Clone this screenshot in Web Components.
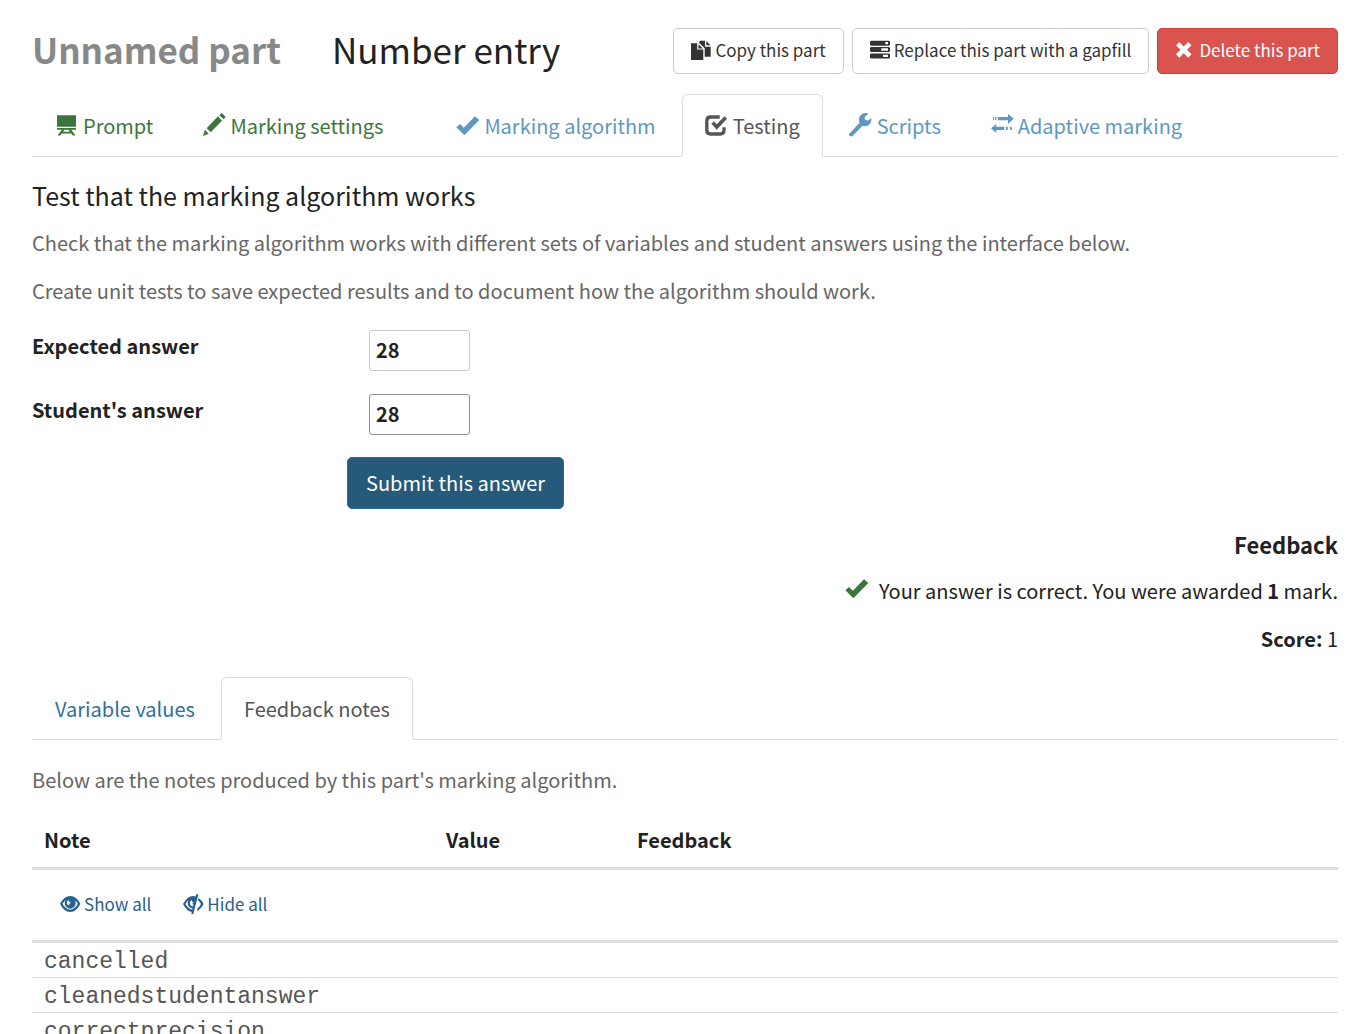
<!DOCTYPE html>
<html lang="en">
<head>
<meta charset="utf-8">
<title>Number entry part</title>
<style>
  :root {
    --text: #222;
    --muted: #666;
    --line: #ddd;
    --link: #2e6f9e;
    --green: #3c763d;
    --soft-blue: #5e98bf;
    --size: 20px;
    --size-small: 17px;
    --leading: 31px;
  }
  html { scrollbar-width: none; }
  body {
    margin: 0;
    background: #fff;
    color: var(--text);
    font-family: "Noto Sans CJK SC", "Noto Sans", sans-serif;
    font-size: var(--size);
    line-height: var(--leading);
  }
</style>
</head>
<body>
<part-editor></part-editor>
<script>
const icons = {
  blackboard: '<path d="M2 1.3h19v11.4H2zM2 14h19v1.8h-4.6l4 5.6h-2.6l-1.5-2H6.700l-1.500 2H2.600l4-5.600H2zM9.500 15.800l-1.400 1.900h6.800l-1.400-1.900z"/>',
  pencil: '<path d="M19.700-1l4 4-2 2.300-4.400-4zM16 2.300l4 4.400L8.700 18.300l-4-4zM3 15.700l3.700 4L1 22z"/>',
  ok: '<path d="M.3 13.300L4 10.100l3.800 3.700L19 2.300l4.300 3.600L8.400 21.200z"/>',
  check: '<path d="M14.700 3H5.700Q1.800 3 1.800 6.700v9.600Q1.800 20 5.700 20h9.600Q19 20 19 16.300v-3" fill="none" stroke="currentColor" stroke-width="3.300"/><path d="M6.300 9.500L9 7.400l2.700 2.800 7.800-8 2.500 2.500-10.300 11z"/>',
  wrench: '<path d="M0 20L10.500 9Q8.500 3 13 0q3-1.600 6.300-.3l-3.800 3.500.8 2.800 2.900.6L22.300 4Q23.300 9 19 11.500q-3 1.200-5.500.3L3.500 22Q1.500 23 .3 21.500z"/>',
  transfer: '<path d="M3 3h1v3.300H3zM5.200 3h1.200v3.300H5.200zM7.700 3H18V0l5.700 4.700L18 10V6.300H7.700zM6.300 10v2.700h8V16h-8v3L1 14.300zM16 12.700h1.700V16H16zM20 12.700h1.700V16H20z"/>',
  duplicate: '<path d="M8.700.7H14v6h5.700v10h-6V8.200L8.200 3zM15.300.9l4.200 4.400h-4.200zM0 3.300h6.200v6.200h6.100V20H0zM7.400 4.200l4.600 4.200H7.400z"/>',
  tasks: '<path fill-rule="evenodd" d="M1.500.7h17Q20 .7 20 2v2.500q0 1.200-1.500 1.200h-17Q0 5.700 0 4.500V2Q0 .7 1.500.7zM15.300 2v2.300H18V2zM1.500 7h17Q20 7 20 8.300v2.500q0 1.200-1.500 1.200h-17Q0 12 0 10.800V8.300Q0 7 1.500 7zM11.300 8.300v2.400H18V8.300zM1.500 13.400h17q1.500 0 1.500 1.200v2.600q0 1.300-1.500 1.300h-17Q0 18.500 0 17.200v-2.600q0-1.200 1.500-1.200zM13 14.800v2.300h5v-2.300z"/>',
  remove: '<path d="M1 5.300L4.300 2 8.700 6.500 13.200 2l3.300 3.300L12 9.800l4.500 4.500-3.300 3.400-4.500-4.500-4.400 4.500L1 14.300l4.400-4.500z"/>',
  eye: '<path fill-rule="evenodd" d="M0 9.700Q4 2 10.200 2t10.200 7.700Q16.400 18 10.200 18T0 9.700zM2.600 9.800q3 5.800 7.600 5.800t7.600-5.800q-1.200-2.400-3.100-3.800 1 1.500 1 3.200a5.500 5.500 0 0 1-11 0q0-1.700 1-3.200Q3.800 7.400 2.600 9.800zM8.600 6q-2 1-1.800 3.300.3 2.100 2.600 2.200L9 9.800q1.700.2 1.700-1.500-1.900.2-2.100-2.300z"/>',
  eyeClose: '<path fill-rule="evenodd" d="M13.300.2h2.100L10.300 20H8.200l.6-2Q3.600 17 0 9.900 4.200 2 10.200 2q1.300 0 2.500.4zM5.300 5.900Q3.700 7.300 2.500 9.900q2.600 4.800 6.800 5.600l.3-1.100q-4.700-.6-5-5.100 0-1.900.7-3.400zM8.700 6.100Q6.500 7.300 6.800 9.700q.4 2.200 3.200 2.800l.5-1.800q-1.500 0-1.500-1.100 1.500.1 1.500-1.300-1.700.1-1.800-2.200z"/><path d="M15.600 3.900q3 2 5 6-2.700 5.300-6.800 7.200l.7-2.800q2-1.500 3.500-4.400-1.300-2.400-3.100-4z"/>'
};

const define = (name, template, setup) => customElements.define(name, class extends HTMLElement {
  connectedCallback() {
    if (this.shadowRoot) return;
    const root = this.attachShadow({ mode: "open" });
    root.innerHTML = template;
    if (setup) setup(this, root);
  }
});

// Glyph drawn in the current text colour; "small" suits button-sized text.
define("glyph-icon", `
  <style>
    :host { display: block; flex: none; width: 23px; height: 23px; }
    :host([small]) { width: 20px; height: 20px; }
    svg { display: block; width: 100%; height: 100%; overflow: visible; fill: currentColor; }
  </style>
  <svg aria-hidden="true"></svg>`, (host, root) => {
  const svg = root.querySelector("svg");
  const side = host.hasAttribute("small") ? 20 : 23;
  svg.setAttribute("viewBox", `0 0 ${side} ${side}`);
  svg.innerHTML = icons[host.getAttribute("name")];
});

define("action-button", `
  <style>
    :host { display: block; }
    button {
      display: flex; align-items: center; gap: 4px; margin: 0; padding: 7px 17px 9px;
      border: 1px solid #ccc; border-radius: 5px; background: #fff; color: #333;
      font: inherit; font-size: var(--size-small); line-height: 28px; white-space: nowrap; cursor: pointer;
    }
    :host([kind=danger]) button { background: #d9534f; border-color: #d43f3a; color: #fff; }
    :host([kind=primary]) button {
      background: #265a7a; border-color: #2a6a96; color: #fff;
      font-size: var(--size); line-height: 30px; padding: 10px 18px;
    }
    :host([kind=link]) button { border-color: transparent; background: none; color: #286090; padding: 7px 15px 9px; }
  </style>
  <button type="button"><slot name="icon"></slot><span><slot></slot></span></button>`);

define("part-header", `
  <style>
    :host { display: flex; align-items: flex-start; justify-content: space-between; }
    h2 { display: flex; gap: 51px; margin: 0; font-size: 35px; line-height: 42px; font-weight: 400; white-space: nowrap; }
    b { color: #888; }
    .actions { display: flex; gap: 8px; }
  </style>
  <h2><b>Unnamed part</b><span>Number entry</span></h2>
  <div class="actions">
    <action-button><glyph-icon slot="icon" small name="duplicate"></glyph-icon>Copy this part</action-button>
    <action-button><glyph-icon slot="icon" small name="tasks"></glyph-icon>Replace this part with a gapfill</action-button>
    <action-button kind="danger"><glyph-icon slot="icon" small name="remove"></glyph-icon>Delete this part</action-button>
  </div>`);

define("tab-bar", `
  <style>
    :host { display: block; border-bottom: 1px solid var(--line); }
    nav { display: flex; gap: 3px; margin-bottom: -1px; }
  </style>
  <nav><slot></slot></nav>`);

define("tab-item", `
  <style>
    :host { display: block; color: var(--link); }
    :host([tone=required]) { color: var(--green); }
    :host([tone=optional]) { color: var(--soft-blue); }
    :host([active]) { color: #555; }
    :host([apart]) { margin-left: 24px; }
    a {
      display: flex; align-items: center; gap: 5px; padding: 15px 22px;
      border: 1px solid transparent; border-radius: 6px 6px 0 0;
      color: inherit; text-decoration: none; white-space: nowrap;
    }
    :host([active]) a { background: #fff; border-color: var(--line) var(--line) #fff; }
  </style>
  <a href="#"><slot name="icon"></slot><span><slot></slot></span></a>`);

define("answer-field", `
  <style>
    :host { display: flex; align-items: flex-start; font-weight: 700; }
    label { width: 337px; }
    input {
      box-sizing: border-box; width: 101px; height: 41px; margin: 0; padding: 0 6px 2px;
      border: 1px solid #8f8f9d; border-radius: 3px; background: #fff; color: var(--text);
      font: inherit; line-height: 37px;
    }
    input:disabled { border-color: #c7c7ce; opacity: 1; -webkit-text-fill-color: var(--text); }
  </style>
  <label for="answer"></label><input id="answer" type="text">`, (host, root) => {
  const input = root.querySelector("input");
  root.querySelector("label").textContent = host.getAttribute("label");
  input.value = host.getAttribute("value");
  input.disabled = host.hasAttribute("disabled");
});

define("feedback-summary", `
  <style>
    :host { display: flex; flex-direction: column; align-items: flex-end; gap: 17px; }
    h4 { margin: 0 0 -3px; font-size: 22px; line-height: 33px; }
    p { display: flex; margin: 0; }
    .result { gap: 11px; }
    glyph-icon { color: var(--green); margin-top: 2px; }
  </style>
  <h4>Feedback</h4>
  <p class="result"><glyph-icon name="ok"></glyph-icon><span>Your answer is correct. You were awarded <b>1</b> mark.</span></p>
  <p><span><b>Score:</b> 1</span></p>`);

define("notes-table", `
  <style>
    :host { display: block; }
    table { width: 100%; border-collapse: separate; border-spacing: 0; table-layout: fixed; }
    th, td { padding: 0 12px; text-align: left; vertical-align: middle; }
    th { height: 56px; border-bottom: 3px solid var(--line); }
    .note { width: 378px; }
    .value { width: 167px; }
    .tools td { height: 70px; padding: 0 12px; border-bottom: 3px solid var(--line); }
    .tools div { display: flex; }
    .row td { height: 34px; border-bottom: 1px solid var(--line); }
    code { color: #555; font: 23px/30px "Liberation Mono", monospace; display: block; padding-top: 4px; }
  </style>
  <table>
    <thead>
      <tr><th class="note">Note</th><th class="value">Value</th><th>Feedback</th></tr>
    </thead>
    <tbody>
      <tr class="tools"><td colspan="3"><div>
        <action-button kind="link"><glyph-icon slot="icon" small name="eye"></glyph-icon>Show all</action-button>
        <action-button kind="link"><glyph-icon slot="icon" small name="eyeClose"></glyph-icon>Hide all</action-button>
      </div></td></tr>
      <tr class="row"><td><code>cancelled</code></td><td></td><td></td></tr>
      <tr class="row"><td><code>cleanedstudentanswer</code></td><td></td><td></td></tr>
      <tr class="row"><td><code>correctprecision</code></td><td></td><td></td></tr>
    </tbody>
  </table>`);

define("part-editor", `
  <style>
    :host { display: block; padding: 28px 27px 0 32px; }
    part-header { margin-bottom: 20px; }
    h3 { margin: 19px 0 13px; font-size: 25px; line-height: 38px; font-weight: 400; }
    p { margin: 0 0 17px; color: var(--muted); }
    form { display: flex; flex-direction: column; gap: 23px; margin-top: 24px; }
    .submit { margin: -1px 0 19px 315px; display: flex; }
    feedback-summary { margin-bottom: 23px; }
    .intro { margin: 24px 0 16px; }
  </style>
  <part-header></part-header>
  <tab-bar>
    <tab-item tone="required"><glyph-icon slot="icon" name="blackboard"></glyph-icon>Prompt</tab-item>
    <tab-item tone="required"><glyph-icon slot="icon" name="pencil"></glyph-icon>Marking settings</tab-item>
    <tab-item tone="optional" apart><glyph-icon slot="icon" name="ok"></glyph-icon>Marking algorithm</tab-item>
    <tab-item active><glyph-icon slot="icon" name="check"></glyph-icon>Testing</tab-item>
    <tab-item tone="optional"><glyph-icon slot="icon" name="wrench"></glyph-icon>Scripts</tab-item>
    <tab-item tone="optional"><glyph-icon slot="icon" name="transfer"></glyph-icon>Adaptive marking</tab-item>
  </tab-bar>
  <h3>Test that the marking algorithm works</h3>
  <p>Check that the marking algorithm works with different sets of variables and student answers using the interface below.</p>
  <p>Create unit tests to save expected results and to document how the algorithm should work.</p>
  <form>
    <answer-field label="Expected answer" value="28" disabled></answer-field>
    <answer-field label="Student's answer" value="28"></answer-field>
    <div class="submit"><action-button kind="primary">Submit this answer</action-button></div>
  </form>
  <feedback-summary></feedback-summary>
  <tab-bar>
    <tab-item>Variable values</tab-item>
    <tab-item active>Feedback notes</tab-item>
  </tab-bar>
  <p class="intro">Below are the notes produced by this part's marking algorithm.</p>
  <notes-table></notes-table>`);
</script>
</body>
</html>
